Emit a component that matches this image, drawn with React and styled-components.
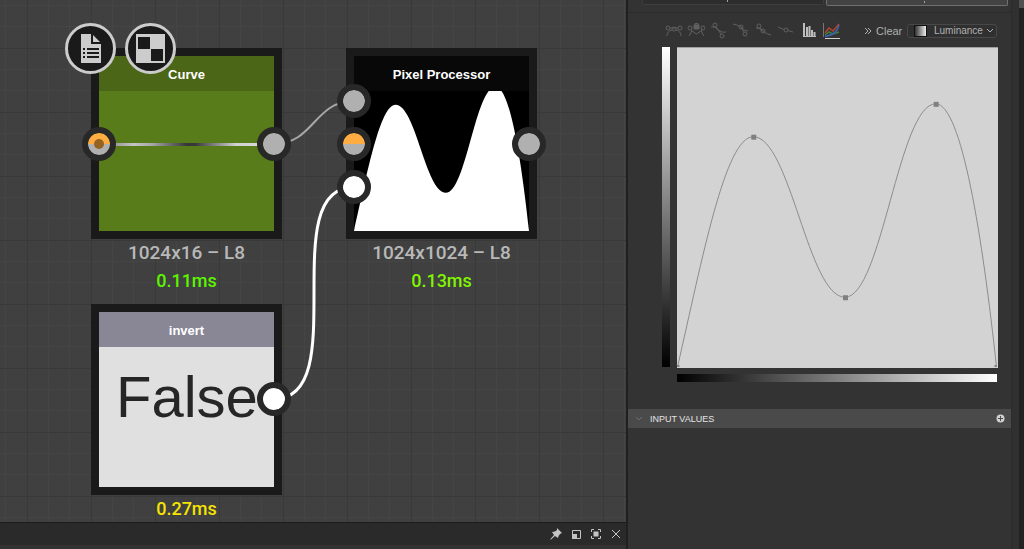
import React, {useState} from 'react';
import styled, {createGlobalStyle} from 'styled-components';


const GlobalStyle = createGlobalStyle`
* {
  box-sizing: border-box;
}

body {
  margin: 0;
  background: #333333;
  font-family: "Liberation Sans", Arial, sans-serif;
}

button {
  padding: 0;
  border: 0;
  background: none;
  color: inherit;
  font: inherit;
}
`;

const Page = styled.div`
display: flex;
min-height: 100vh;
overflow: hidden;
`;

const Workspace = styled.main`
flex: 1;
min-width: 0;
display: flex;
flex-direction: column;
border-right: 2px solid #202020;
`;

const Canvas = styled.section`
position: relative;
flex: 1;
overflow: hidden;
background-color: #404040;
background-image:
  linear-gradient(#393939 1px, transparent 1px),
  linear-gradient(90deg, #393939 1px, transparent 1px),
  linear-gradient(transparent 21px, #454545 21px, #454545 22px, transparent 22px, transparent 42px, #454545 42px, #454545 43px, transparent 43px),
  linear-gradient(90deg, transparent 21px, #454545 21px, #454545 22px, transparent 22px, transparent 42px, #454545 42px, #454545 43px, transparent 43px);
background-size: 64px 64px;
background-position: 27px 48px;
`;

const Wires = styled.svg`
position: absolute;
left: 0;
top: 0;
width: 100%;
height: 100%;
fill: none;
`;

const NodeWrapper = styled.article`
position: absolute;
left: ${({x}) => x}px;
top: ${({y}) => y}px;
width: 191px;
text-align: center;
`;

const NodeBox = styled.div`
position: relative;
height: 191px;
border: 8px solid #1a1a1a;
background: ${({color}) => color};
`;

const NodeTitle = styled.h2`
position: relative;
margin: 0;
height: 35px;
line-height: 37px;
font-size: 13px;
font-weight: 700;
color: #ffffff;
background: ${({color}) => color};
`;

const Preview = styled.svg`
position: absolute;
left: 0;
top: 0;
width: 100%;
height: 100%;
`;

const Strip = styled.div`
position: absolute;
left: 0;
right: 0;
top: 87px;
height: 3px;
background: linear-gradient(90deg, #777777, #c4c4c4 20%, #a8a8a8 30%, #383838 50%, #383838 55%, #d0d0d0 78%, #d8d8d8 90%, #777777);
`;

const BoolValue = styled.p`
margin: 0;
padding-left: 17px;
text-align: left;
line-height: 100px;
font-size: 58px;
color: #262626;
`;

const Caption = styled.p`
margin: 0;
line-height: 28px;
font-family: Roboto, "Liberation Sans", sans-serif;
font-size: ${({color}) => color ? 18 : 19}px;
font-weight: 500;
color: ${({color}) => color || '#b8b8b8'};
`;

const Port = styled.span`
position: absolute;
${({side}) => side}: -17px;
top: ${({y}) => y}px;
width: 34px;
height: 34px;
border: 6px solid #282828;
border-radius: 50%;
background: ${({fill}) => fill || '#b0b0b0'};
background-clip: padding-box;

&::after {
  content: "";
  display: ${({dot}) => dot ? 'block' : 'none'};
  width: 10px;
  height: 10px;
  margin: 6px;
  border-radius: 50%;
  background: #946322;
}
`;

const Badges = styled.div`
position: absolute;
left: 65px;
top: 23px;
display: flex;
gap: 9px;
`;

const Badge = styled.button`
width: 51px;
height: 51px;
display: grid;
place-items: center;
border: 3px solid #cccccc;
border-radius: 50%;
background: #1a1a1a;
`;

const DockBar = styled.footer`
display: flex;
justify-content: flex-end;
align-items: center;
gap: 8px;
height: 27px;
padding: 0 4px 4px 0;
border-top: 1px solid #1c1c1c;
border-bottom: 4px solid #333333;
background: #2a2a2a;
color: #c4c4c4;
`;

const DockButton = styled.button`
width: 12px;
height: 12px;
margin-top: 4px;

svg {
  display: block;
}
`;

const Side = styled.aside`
flex: 0 0 396px;
display: flex;
`;

const Panel = styled.div`
flex: 1;
min-width: 0;
background: #333333;
`;

const Gutter = styled.div`
width: 8px;
border-left: 1px solid #2b2b2b;
background: #303030;
`;

const Edge = styled.div`
width: 5px;
border-top: 8px solid #505050;
background: #212121;
`;

const ModeRow = styled.div`
display: flex;
align-items: flex-start;
gap: 2px;
height: 13px;
padding: 0 3px 0 14px;
border-bottom: 1px solid #2b2b2b;
`;

// only the lower edge is in view; the mark is a descender of the label above
const ModeButton = styled.button`
width: 50%;
height: ${({$active}) => $active ? 6 : 5}px;
padding-left: ${({$active}) => $active ? 16 : 0}px;
padding-right: ${({$active}) => $active ? 0 : 10}px;
border: 1px solid ${({$active}) => $active ? '#707070' : '#3d3d3d'};
border-top: 0;
border-radius: 0 0 2px 2px;
background: ${({$active}) => $active ? '#434343' : '#2d2d2d'};

&::before {
  content: "";
  display: block;
  width: 1px;
  height: 2px;
  margin: 0 auto 2px;
  background: #a0a0a0;
}
`;

const Toolbar = styled.div`
display: flex;
align-items: center;
height: 34px;
padding: 2px 14px 0 37px;
color: #b0b0b0;
`;

const ToolGroup = styled.div`
display: flex;
gap: 4px;
margin-right: 7px;
`;

const ToolButton = styled.button`
width: 18px;
height: 18px;
color: #606060;

svg {
  display: block;
  fill: none;
  stroke: currentColor;
}
`;

const ToolActions = styled.div`
display: flex;
align-items: center;
margin-left: auto;
font-size: 11px;
`;

const MoreButton = styled.button`
width: 12px;
height: 14px;
display: flex;
align-items: center;
`;

const ClearButton = styled.button`
display: flex;
align-items: center;
width: 31px;
height: 14px;
`;

const ChannelBox = styled.label`
position: relative;
display: flex;
align-items: center;
width: 90px;
height: 14px;
padding-left: 6px;
border: 1px solid #484848;
border-radius: 3px;
background: #303030;
`;

const Swatch = styled.span`
width: 13px;
height: 12px;
border: 1px solid #111111;
background: linear-gradient(90deg, #333333, #eeeeee);
`;

const ChannelSelect = styled.select`
flex: 1;
min-width: 0;
height: 12px;
padding: 0 0 0 7px;
border: 0;
outline: 0;
appearance: none;
background: none;
color: #b0b0b0;
font: 10px/12px "Liberation Sans", Arial, sans-serif;
`;

const Chevron = styled.svg`
position: absolute;
right: 2px;
top: 3px;
fill: none;
stroke: #b0b0b0;
pointer-events: none;
`;

const CurveEditor = styled.div`
display: grid;
grid-template-columns: 8px 1fr;
gap: 6px 7px;
padding: 0 13px 27px 34px;
`;

const Ramp = styled.div`
grid-column: ${({$column}) => $column};
min-height: 8px;
margin: ${({$column}) => $column === 1 ? '0 0 1px' : '0 1px 0 0'};
background: linear-gradient(${({$column}) => $column === 1 ? '0deg' : '90deg'}, #000000, #ffffff);
`;

const Graph = styled.svg`
display: block;
width: 100%;
aspect-ratio: 1;
border-top: 1px solid #a0a0a0;
background: #d3d3d3;
`;

const SectionHeader = styled.header`
display: flex;
align-items: center;
height: 19px;
padding: 0 6px 0 7px;
background: #4a4a4a;
color: #e4e4e4;

h3 {
  flex: 1;
  margin: 0 0 0 7px;
  font-size: 9px;
  font-weight: 400;
}

button, svg {
  display: block;
}
`;


// shared by the graph and the pixel processor preview, in a 320 square
const curve = 'M0 320C25 211 48 89 76 89C113 89 131 250 168 250C205 250 222 56 259 56C285 56 306 190 320 320';
const keys = [[76, 89], [168, 250], [259, 56]];
const halfOrange = 'linear-gradient(#ffad42 50%, #b0b0b0 50%)';

const tools = [
  {name: 'Break tangents', draw: <><circle cx="3" cy="6" r="2"/><circle cx="9" cy="7" r="2"/><circle cx="15" cy="6" r="2"/><path d="M5 6H13M7 8Q2 9 2 14M11 8Q16 9 16 14"/></>},
  {name: 'Lock tangents', draw: <><circle cx="3" cy="6" r="2"/><circle cx="16" cy="6" r="2"/><path d="M8 3V1.500h3V3M2 14L5 9L9.500 12L14 9L17 14M4 8L5 9M15 8L14 9"/><path d="M7 3h5v4H7z" fill="currentColor"/></>},
  {name: 'Smooth', draw: <><circle cx="6" cy="3" r="2"/><circle cx="13" cy="14" r="2"/><path d="M2 5Q6 4 8 7L11 9Q14 11 17 10M7 5L12 12"/></>},
  {name: 'Flat left', draw: <><circle cx="10" cy="5" r="2"/><circle cx="14" cy="12" r="2"/><path d="M2 2Q7 3 10 5Q13 9 17 9M11 7L13 10"/></>},
  {name: 'Flat right', draw: <><circle cx="6" cy="4" r="2"/><circle cx="10" cy="9" r="2"/><path d="M3 6Q7 6 10 9Q13 12 18 13M7 6L9 8"/></>},
  {name: 'Linear', draw: <><circle cx="11" cy="8" r="2"/><path d="M3 5L9 7.500M13 8.500L18 10"/></>},
];

const GraphNode = ({x, y, title, color, titleColor, size, time, timeColor, ports, children}) => (
  <NodeWrapper x={x} y={y}>
    <NodeBox color={color}>
      {children.preview}
      <NodeTitle color={titleColor}>{title}</NodeTitle>
      {children.body}
      {ports.map((port, i) => <Port key={i} {...port}/>)}
    </NodeBox>
    {size && <Caption>{size}</Caption>}
    <Caption color={timeColor}>{time}</Caption>
  </NodeWrapper>
)

const CanvasArea = () => (
  <Canvas aria-label="Graph">
    <Wires>
      <path d="M274 144C314 144 314 101 354 101" stroke="#a8a8a8" strokeWidth="2"/>
      <path d="M274 399C354 399 274 187 354 187" stroke="#ffffff" strokeWidth="3"/>
    </Wires>
    <GraphNode x={91} y={48} title="Curve" color="#587c1a" titleColor="#4a6616"
      size="1024x16 – L8" time="0.11ms" timeColor="#5cf500"
      ports={[{side: 'left', y: 71, fill: halfOrange, dot: 'on'}, {side: 'right', y: 71}]}>
      {{preview: <Strip/>}}
    </GraphNode>
    <GraphNode x={346} y={48} title="Pixel Processor" color="#000000" titleColor="#080808"
      size="1024x1024 – L8" time="0.13ms" timeColor="#80f500"
      ports={[
        {side: 'left', y: 28},
        {side: 'left', y: 71, fill: halfOrange},
        {side: 'left', y: 114, fill: '#ffffff'},
        {side: 'right', y: 71},
      ]}>
      {{preview: <Preview viewBox="0 0 320 320"><path d={curve + 'Z'} fill="#ffffff"/></Preview>}}
    </GraphNode>
    <GraphNode x={91} y={304} title="invert" color="#e0e0e0" titleColor="#898696"
      time="0.27ms" timeColor="#f5e400"
      ports={[{side: 'right', y: 70, fill: '#ffffff'}]}>
      {{body: <BoolValue>False</BoolValue>}}
    </GraphNode>
    <Badges>
      <Badge aria-label="Document">
        <svg width="22" height="29" viewBox="0 0 22 29">
          <path d="M1 0H11V10H21V29H1Z" fill="#cccccc"/>
          <path d="M13 1V8H20Z" fill="#cccccc"/>
          <path d="M3 15h2M3 19h2M3 23h2M7 15h12M7 19h12M7 23h12" stroke="#1a1a1a" strokeWidth="2"/>
        </svg>
      </Badge>
      <Badge aria-label="Checker">
        <svg width="29" height="29" viewBox="0 0 29 29">
          <path d="M0 0H29V29H0Z" fill="#cccccc"/>
          <path d="M2 3H14V15H2ZM15 15H27V27H15Z" fill="#1a1a1a"/>
        </svg>
      </Badge>
    </Badges>
  </Canvas>
)

const CurveToolbar = () => {

const [channel, setChannel] = useState('Luminance');

  return (
    <Toolbar>
      <ToolGroup>
        {tools.map(({name, draw}) => (
          <ToolButton key={name} aria-label={name}>
            <svg width="18" height="18">{draw}</svg>
          </ToolButton>
        ))}
      </ToolGroup>
      <ToolGroup>
        <ToolButton aria-label="Histogram">
          <svg width="18" height="18">
            <path d="M3 1h2v13H3zM6 5h2v9H6zM8.500 4h2v10h-2zM11 8h2v6h-2zM13.500 10h2v4h-2z" fill="#bdbdbd" stroke="none"/>
            <path d="M3 14.500H16" stroke="#bdbdbd"/>
          </svg>
        </ToolButton>
        <ToolButton aria-label="All channels">
          <svg width="18" height="18">
            <path d="M1.500 1V15" stroke="#777777"/>
            <path d="M3 16.500H18" stroke="#d0d0d0"/>
            <g strokeWidth="1.5">
              <path d="M3 11L7 6L11 9L17 2" stroke="#b8442c"/>
              <path d="M3 13L7 10L11 12L17 10" stroke="#3f7f3a"/>
              <path d="M3 14.500Q15 13 17 3" stroke="#3a64b0"/>
            </g>
          </svg>
        </ToolButton>
      </ToolGroup>
      <ToolActions>
        <MoreButton aria-label="More">
          <svg width="8" height="8" fill="none" stroke="currentColor"><path d="M1 1L4 4L1 7M4 1L7 4L4 7"/></svg>
        </MoreButton>
        <ClearButton>Clear</ClearButton>
        <ChannelBox>
          <Swatch/>
          <ChannelSelect aria-label="Channel" value={channel} onChange={(e) => setChannel(e.target.value)}>
            <option>Luminance</option>
          </ChannelSelect>
          <Chevron width="8" height="6"><path d="M1 1L4 4L7 1"/></Chevron>
        </ChannelBox>
      </ToolActions>
    </Toolbar>
  )
}

const App = () => (
  <Page>
    <GlobalStyle/>
    <Workspace>
      <CanvasArea/>
      <DockBar>
        <DockButton aria-label="Pin">
          <svg width="12" height="12">
            <path d="M7 0L12 5L10 6L8.500 8L8 10L5 8L1 11.500L0 11.500L4 7L2 4L5 3.500L7 2Z" fill="currentColor"/>
          </svg>
        </DockButton>
        <DockButton aria-label="Restore">
          <svg width="12" height="12">
            <path d="M2.500 2.500H10.500V10.500H2.500Z" fill="none" stroke="currentColor"/>
            <path d="M2 6H7V11H2Z" fill="currentColor"/>
          </svg>
        </DockButton>
        <DockButton aria-label="Maximize">
          <svg width="12" height="12">
            <path d="M1.500 4V1.500H4M8 1.500H10.500V4M10.500 8V10.500H8M4 10.500H1.500V8" fill="none" stroke="currentColor"/>
            <path d="M3.500 3.500H8.500V8.500H3.500Z" fill="currentColor"/>
          </svg>
        </DockButton>
        <DockButton aria-label="Close">
          <svg width="12" height="12">
            <path d="M2 2L10 10M10 2L2 10" stroke="currentColor"/>
          </svg>
        </DockButton>
      </DockBar>
    </Workspace>
    <Side>
      <Panel>
        <ModeRow>
          <ModeButton aria-label="Absolute"/>
          <ModeButton aria-label="Relative" $active/>
        </ModeRow>
        <CurveToolbar/>
        <CurveEditor>
          <Ramp $column={1}/>
          <Graph viewBox="0 0 321 321">
            <path d={curve} fill="none" stroke="#8c8c8c"/>
            {keys.map(([x, y]) => <rect key={x} x={x - 2} y={y - 2} width="5" height="5" fill="#808080"/>)}
            <path d="M0 318h2v2H0zM318 318h2v2h-2z" fill="#808080"/>
          </Graph>
          <Ramp $column={2}/>
        </CurveEditor>
        <SectionHeader>
          <svg width="8" height="6" fill="none" stroke="#707070"><path d="M1 1L4 4L7 1"/></svg>
          <h3>INPUT VALUES</h3>
          <button aria-label="Add input">
            <svg width="9" height="9">
              <circle cx="4.500" cy="4.500" r="4" fill="#d0d0d0"/>
              <path d="M4.500 2V7M2 4.500H7" stroke="#4a4a4a"/>
            </svg>
          </button>
        </SectionHeader>
      </Panel>
      <Gutter/>
      <Edge/>
    </Side>
  </Page>
)

export default App;
